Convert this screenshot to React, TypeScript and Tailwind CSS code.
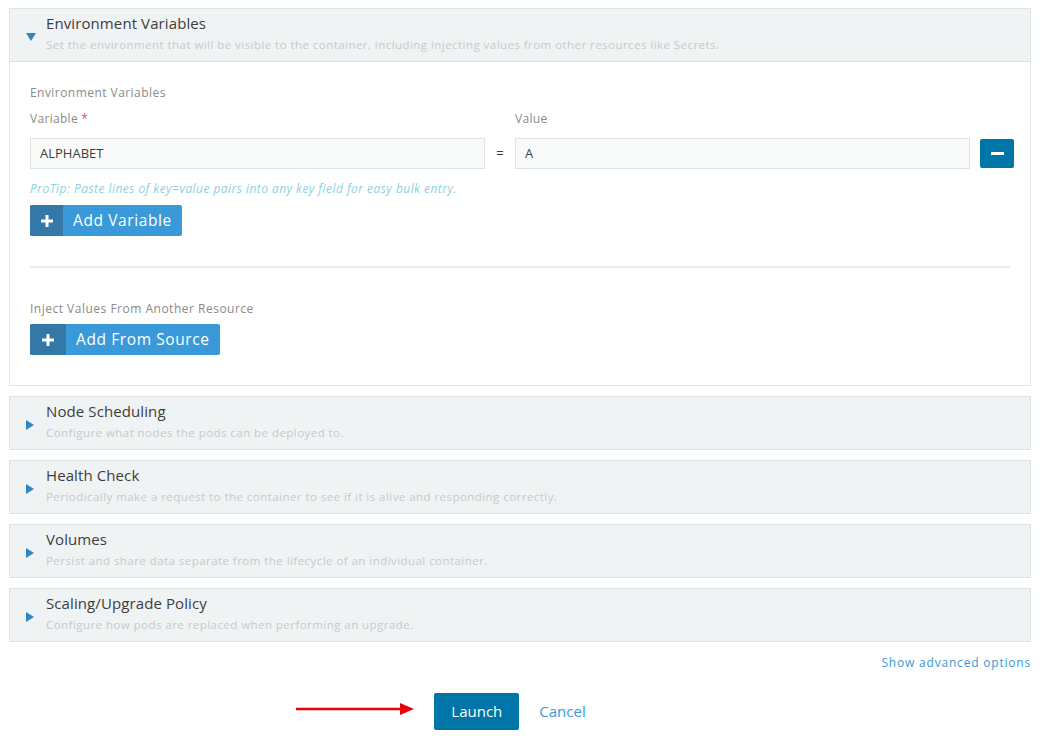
import React from 'react';

const font = { fontFamily: '"Open Sans", "Noto Sans", sans-serif' };

function Caret({ open }: { open?: boolean }) {
  return open ? (
    <svg width="10" height="8" viewBox="0 0 10 8" className="shrink-0">
      <polygon points="0,0 10,0 5,8" fill="#2f86c6" />
    </svg>
  ) : (
    <svg width="8" height="10" viewBox="0 0 8 10" className="shrink-0">
      <polygon points="0,0 8,5 0,10" fill="#2f86c6" />
    </svg>
  );
}

function PanelHeader({ title, desc, open }: { title: string; desc: string; open?: boolean }) {
  return (
    <div className="flex items-center h-[52px] bg-[#eff3f4] pl-[16px]">
      <div className="w-[20px] pt-[3px] flex">
        <Caret open={open} />
      </div>
      <div className="flex flex-col pb-[4px]">
        <div className="text-[15px] leading-[20px] text-[#3d3d3d] tracking-[0.1px]">{title}</div>
        <div className="text-[11.5px] leading-[18px] text-[#c6cacc] mt-[3px] tracking-[0.45px]">{desc}</div>
      </div>
    </div>
  );
}

function Plus() {
  return (
    <svg width="12" height="12" viewBox="0 0 12 12">
      <rect x="4.5" y="0" width="3" height="12" fill="#fff" />
      <rect x="0" y="4.5" width="12" height="3" fill="#fff" />
    </svg>
  );
}

function AddButton({ label, iconW }: { label: string; iconW: string }) {
  return (
    <button className="flex h-[31px] rounded-[2px] overflow-hidden bg-[#3a9ad9] text-white">
      <span className={`${iconW} h-full flex items-center justify-center bg-[#3478a8]`}>
        <Plus />
      </span>
      <span className="px-[10px] flex items-center text-[15.5px] tracking-[0.6px]">{label}</span>
    </button>
  );
}

const collapsed = [
  { title: 'Node Scheduling', desc: 'Configure what nodes the pods can be deployed to.' },
  { title: 'Health Check', desc: 'Periodically make a request to the container to see if it is alive and responding correctly.' },
  { title: 'Volumes', desc: 'Persist and share data separate from the lifecycle of an individual container.' },
  { title: 'Scaling/Upgrade Policy', desc: 'Configure how pods are replaced when performing an upgrade.' },
];

export default function App() {
  return (
    <div className="bg-white min-h-screen w-[1043px] h-[738px] overflow-hidden pl-[9px] pr-[12px] pt-[8px]" style={font}>
      <div className="border border-[#dde4e5]">
        <PanelHeader
          open
          title="Environment Variables"
          desc="Set the environment that will be visible to the container, including injecting values from other resources like Secrets."
        />
        <div className="border-t border-[#dde4e5] px-[20px] pt-[22px] pb-[30px]">
          <div className="text-[12px] leading-[18px] text-[#8a8a8a] tracking-[0.45px]">Environment Variables</div>
          <div className="flex mt-[8px] text-[12px] leading-[18px] text-[#8a8a8a] tracking-[0.3px]">
            <div className="w-[485px] shrink-0">
              Variable <span className="text-[#f04d4d]">*</span>
            </div>
            <div>Value</div>
          </div>
          <div className="flex items-center mt-[10px]">
            <div className="w-[455px] shrink-0 h-[31px] border border-[#dce4e4] bg-[#f9fbfb] flex items-center px-[9px] text-[13px] text-[#3d3d3d]">
              ALPHABET
            </div>
            <div className="w-[30px] shrink-0 text-center text-[13px] text-[#3d3d3d]">=</div>
            <div className="w-[455px] shrink-0 h-[31px] border border-[#dce4e4] bg-[#f9fbfb] flex items-center px-[9px] text-[13px] text-[#3d3d3d]">
              A
            </div>
            <button className="ml-[10px] shrink-0 w-[34px] h-[29px] rounded-[2px] bg-[#0075a8] flex items-center justify-center">
              <span className="w-[13px] h-[3px] bg-white" />
            </button>
          </div>
          <div className="mt-[12px] text-[12px] italic text-[#8fd0e0] leading-[16px] tracking-[0.45px]">
            ProTip: Paste lines of key=value pairs into any key field for easy bulk entry.
          </div>
          <div className="mt-[8px]">
            <AddButton label="Add Variable" iconW="w-[33px]" />
          </div>
          <div className="h-[2px] bg-[#eaeeee] mt-[30px]" />
          <div className="mt-[32px] text-[12px] leading-[18px] text-[#8a8a8a] tracking-[0.5px]">Inject Values From Another Resource</div>
          <div className="mt-[6px]">
            <AddButton label="Add From Source" iconW="w-[36px]" />
          </div>
        </div>
      </div>

      <div className="flex flex-col gap-[10px] mt-[10px]">
        {collapsed.map((p) => (
          <div key={p.title} className="border border-[#dde4e5]">
            <PanelHeader title={p.title} desc={p.desc} />
          </div>
        ))}
      </div>

      <div className="flex justify-end mt-[12px] text-[12px] text-[#3d98d3] tracking-[0.8px]">Show advanced options</div>

      <div className="flex justify-center items-center mt-[21px]">
        <div className="relative flex items-center gap-[20px] mr-[20px]">
          <svg className="absolute left-[-140px] top-[9px]" width="122" height="14" viewBox="0 0 122 14">
            <line x1="2" y1="7" x2="110" y2="7" stroke="#e8000b" strokeWidth="2.5" />
            <polygon points="106,1 120,7 106,13" fill="#e8000b" />
          </svg>
          <button className="h-[37px] w-[85px] rounded-[2px] bg-[#0075a8] text-white text-[15px]">Launch</button>
          <span className="text-[15px] text-[#3d98d3]">Cancel</span>
        </div>
      </div>
    </div>
  );
}
